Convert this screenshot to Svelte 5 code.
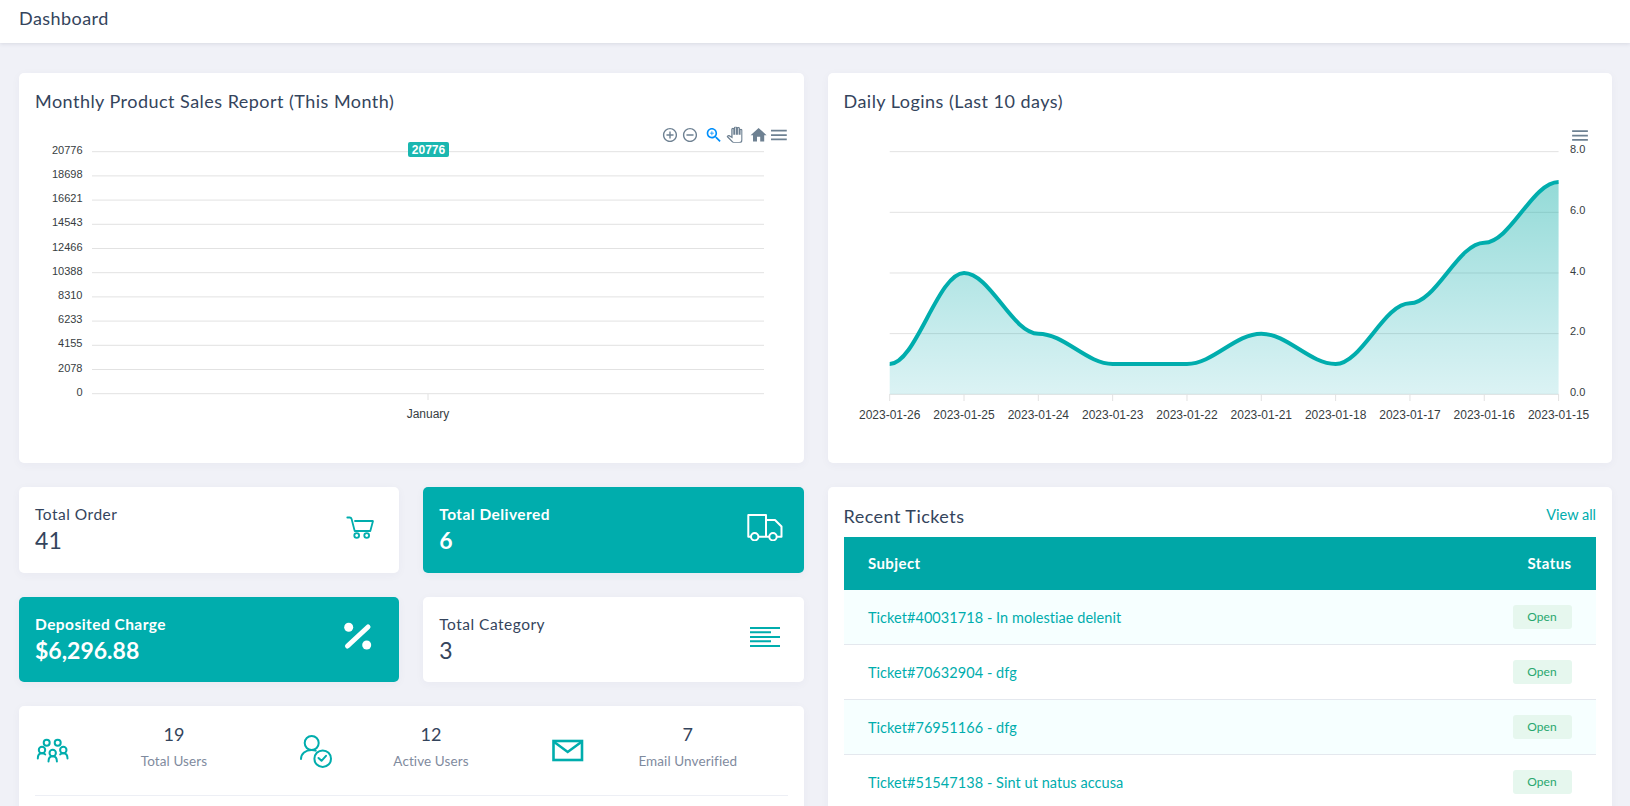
<script>
  const yLabels = [20776, 18698, 16621, 14543, 12466, 10388, 8310, 6233, 4155, 2078, 0];
  const leftY = (i) => 151.7 + i * 24.2;
  const dates = ['2023-01-26','2023-01-25','2023-01-24','2023-01-23','2023-01-22','2023-01-21','2023-01-18','2023-01-17','2023-01-16','2023-01-15'];
  const values = [1, 4, 2, 1, 1, 2, 1, 3, 5, 7];
  const X0 = 889.7, STEP = 74.32, Y0 = 394.3, UNIT = 30.33;
  const px = (i) => X0 + i * STEP;
  const py = (v) => Y0 - v * UNIT;
  let line = `M${px(0)} ${py(values[0])}`;
  for (let i = 1; i < values.length; i++) {
    const d = STEP * 0.35;
    line += ` C${px(i - 1) + d} ${py(values[i - 1])} ${px(i) - d} ${py(values[i])} ${px(i)} ${py(values[i])}`;
  }
  const area = `${line} L${px(9)} ${Y0} L${px(0)} ${Y0} Z`;
  const tickets = [
    'Ticket#40031718 - In molestiae delenit',
    'Ticket#70632904 - dfg',
    'Ticket#76951166 - dfg',
    'Ticket#51547138 - Sint ut natus accusa'
  ];
  const menuPath = 'M3 18h18v-2H3v2zm0-5h18v-2H3v2zm0-7v2h18V6H3z';
</script>

<div class="page">
  <header class="topbar"><h1>Dashboard</h1></header>

  <main class="content">
    <section class="row">
      <div class="card chart-card">
        <h2>Monthly Product Sales Report (This Month)</h2>
        <svg class="chart" viewBox="35 115 753 330" width="753" height="330">
          {#each yLabels as label, i}
            <line x1="92" x2="764" y1={leftY(i)} y2={leftY(i)} class="grid-line" />
            <text x="82.5" y={leftY(i) + 2} text-anchor="end" class="tick">{label}</text>
          {/each}
          <line x1="428" x2="428" y1="394" y2="400" class="grid-line" />
          <text x="428" y="418" text-anchor="middle" class="tick-lg">January</text>
          <rect x="408" y="142" width="41" height="15" rx="2" fill="#1ab7b0" />
          <text x="428.5" y="154" text-anchor="middle" class="data-label">20776</text>

          <svg x="661.5" y="126.5" width="17" height="17" viewBox="0 0 24 24" fill="#6e8192"><path d="M13 7h-2v4H7v2h4v4h2v-4h4v-2h-4V7zm-1-5C6.48 2 2 6.48 2 12s4.48 10 10 10 10-4.48 10-10S17.52 2 12 2zm0 18c-4.41 0-8-3.59-8-8s3.59-8 8-8 8 3.59 8 8-3.59 8-8 8z"/></svg>
          <svg x="681.5" y="126.5" width="17" height="17" viewBox="0 0 24 24" fill="#6e8192"><path d="M7 11v2h10v-2H7zm5-9C6.48 2 2 6.48 2 12s4.48 10 10 10 10-4.48 10-10S17.52 2 12 2zm0 18c-4.41 0-8-3.59-8-8s3.59-8 8-8 8 3.59 8 8-3.59 8-8 8z"/></svg>
          <svg x="704.3" y="125.6" width="19.2" height="19.2" viewBox="0 0 24 24" fill="#008ffb"><path d="M15.5 14h-.79l-.28-.27C15.41 12.59 16 11.11 16 9.5 16 5.91 13.09 3 9.5 3S3 5.91 3 9.5 5.91 16 9.5 16c1.61 0 3.09-.59 4.23-1.57l.27.28v.79l5 4.99L20.49 19l-4.99-5zm-6 0C7.01 14 5 11.99 5 9.5S7.01 5 9.5 5 14 7.01 14 9.5 11.99 14 9.5 14z"/><path d="M12 10h-2v2H9v-2H7V9h2V7h1v2h2v1z"/></svg>
          <svg x="726.6" y="126.7" width="16" height="16" viewBox="0 0 24 24" fill="#fff" stroke="#6e8192" stroke-width="2"><path d="M23 5.5V20c0 2.2-1.8 4-4 4h-7.3c-1.08 0-2.1-.43-2.85-1.19L1 14.83s1.26-1.23 1.3-1.25c.22-.19.49-.29.79-.29.22 0 .42.06.6.16.04.01 4.31 2.46 4.31 2.46V4c0-.83.67-1.5 1.5-1.5S11 3.17 11 4v7h1V1.5c0-.83.67-1.5 1.5-1.5S15 .67 15 1.5V11h1V2.5c0-.83.67-1.5 1.5-1.5s1.5.67 1.5 1.5V11h1V5.5c0-.83.67-1.5 1.5-1.5s1.5.67 1.5 1.5z"/></svg>
          <svg x="749" y="125.6" width="19.2" height="19.2" viewBox="0 0 24 24" fill="#6e8192"><path d="M10 20v-6h4v6h5v-8h3L12 3 2 12h3v8z"/></svg>
          <svg x="768.4" y="124.5" width="21" height="21" viewBox="0 0 24 24" fill="#6e8192"><path d={menuPath}/></svg>
        </svg>
      </div>

      <div class="card chart-card">
        <h2>Daily Logins (Last 10 days)</h2>
        <svg class="chart" viewBox="844 115 753 330" width="753" height="330">
          <defs>
            <linearGradient id="fillGrad" x1="0" y1="0" x2="0" y2="1">
              <stop offset="0" stop-color="#00a8a0" stop-opacity="0.42" />
              <stop offset="1" stop-color="#00a8b0" stop-opacity="0.14" />
            </linearGradient>
          </defs>
          {#each [8, 6, 4, 2, 0] as v}
            <line x1={X0} x2={px(9)} y1={py(v)} y2={py(v)} class="grid-line" />
            <text x="1570" y={py(v) + 1.6} class="tick">{v}.0</text>
          {/each}
          <path d={area} fill="url(#fillGrad)" />
          <path d={line} fill="none" stroke="#00adad" stroke-width="4" />
          {#each dates as d, i}
            <line x1={px(i)} x2={px(i)} y1="394" y2="401" class="grid-line" />
            <text x={px(i)} y="419" text-anchor="middle" class="tick-lg">{d}</text>
          {/each}
          <svg x="1569.5" y="125" width="21" height="21" viewBox="0 0 24 24" fill="#6e8192"><path d={menuPath}/></svg>
        </svg>
      </div>
    </section>

    <section class="row lower">
      <div class="left-col">
        <div class="stat-grid">
          <div class="card stat">
            <div><p class="stat-title">Total Order</p><p class="stat-value">41</p></div>
            <svg class="i-cart" viewBox="27 27 29 23" width="29" height="23" fill="none" stroke="#00adad" stroke-width="1.8" stroke-linecap="round" stroke-linejoin="round"><path d="M28.3 28.5h2.4c1 0 1.6.5 1.9 1.6L35.7 42h15.6L54 32H36"/><circle cx="37.7" cy="46.5" r="2.4"/><circle cx="47.7" cy="46.5" r="2.4"/></svg>
          </div>
          <div class="card stat teal">
            <div><p class="stat-title">Total Delivered</p><p class="stat-value">6</p></div>
            <svg class="i-truck" viewBox="18 24 36 27" width="36" height="27" fill="none" stroke="#fff" stroke-width="2" stroke-linejoin="round"><path d="M22 46.7h-2.7V25H37v21.7h-7.3M37 30h9l6.5 6.5v10.2h-5M40.500 46.700H37"/><circle cx="25.700" cy="46.700" r="3.700"/><circle cx="44" cy="46.700" r="3.700"/></svg>
          </div>
          <div class="card stat teal">
            <div><p class="stat-title">Deposited Charge</p><p class="stat-value">$6,296.88</p></div>
            <svg class="i-pct" viewBox="22 12 30 28" width="30" height="28" fill="#fff"><circle cx="27.700" cy="17.300" r="4.500"/><circle cx="45.700" cy="35" r="4.500"/><path d="M47 17 26.500 36" stroke="#fff" stroke-width="5" stroke-linecap="round"/></svg>
          </div>
          <div class="card stat">
            <div><p class="stat-title">Total Category</p><p class="stat-value">3</p></div>
            <svg class="i-list" viewBox="0 0 30 20" width="30" height="20" stroke="#00adad" stroke-width="2"><path d="M0 1h30M0 5.200h21M0 10h30M0 14.200h21M0 19h30"/></svg>
          </div>
        </div>

        <div class="card users">
          <div class="users-row">
            <div class="metric">
              <svg viewBox="15 14 36 30" width="36" height="30" fill="none" stroke="#00adad" stroke-width="2" stroke-linecap="round"><circle cx="26.700" cy="20.800" r="3"/><circle cx="37.700" cy="20.800" r="3"/><circle cx="22" cy="28" r="3.200"/><circle cx="32.700" cy="31" r="3.200"/><circle cx="43.300" cy="28" r="3.200"/><path d="M17.800 36.500c0-3.500 1.300-5.300 4.200-5.300 1.500 0 2.500.4 3.200 1.200M28.500 39.500c0-3.500 1.300-5.300 4.200-5.300s4.200 1.800 4.200 5.300M40.200 32.400c.7-.8 1.700-1.200 3.100-1.200 2.900 0 4.200 1.800 4.200 5.300"/></svg>
              <div class="metric-text"><strong>19</strong><span>Total Users</span></div>
            </div>
            <div class="metric">
              <svg viewBox="8 6 36 36" width="36" height="36" fill="none" stroke="#00adad" stroke-width="2" stroke-linecap="round" stroke-linejoin="round"><circle cx="21.700" cy="16" r="7"/><path d="M11 32c0-5.500 4.500-9 10.700-9 1.500 0 2.800.2 4 .6"/><circle cx="32.700" cy="31.700" r="8.300"/><path d="m28.500 31 3 2.800 4.500-5"/></svg>
              <div class="metric-text"><strong>12</strong><span>Active Users</span></div>
            </div>
            <div class="metric">
              <svg viewBox="9 11 36 27" width="36" height="27" fill="none" stroke="#00adad" stroke-width="2.600"><rect x="13.500" y="15" width="28.500" height="19"/><path d="m13.500 15.500 14.200 10.500L42 15.500"/></svg>
              <div class="metric-text last"><strong>7</strong><span>Email Unverified</span></div>
            </div>
          </div>
          <hr />
        </div>
      </div>

      <div class="card tickets">
        <div class="tickets-head">
          <h2>Recent Tickets</h2>
          <a href="#all">View all</a>
        </div>
        <table>
          <thead><tr><th>Subject</th><th class="right">Status</th></tr></thead>
          <tbody>
            {#each tickets as t}
              <tr><td><a href="#t">{t}</a></td><td class="right"><span class="badge">Open</span></td></tr>
            {/each}
          </tbody>
        </table>
      </div>
    </section>
  </main>
</div>

<style>
  :global(html), :global(body) { margin: 0; overflow: hidden; background: #f0f1f7; }
  .page { height: 806px; overflow: hidden; font-family: "Lato", "Noto Sans", sans-serif; color: #34445c; }
  .topbar { height: 43px; background: #fff; box-shadow: 0 1px 4px rgba(40, 50, 80, .12); display: flex; align-items: center; padding-left: 19px; }
  h1 { margin: 0; font-size: 18px; font-weight: 400; letter-spacing: .45px; position: relative; top: -4px; }
  h2 { margin: 0; font-size: 18px; font-weight: 400; line-height: 24px; letter-spacing: .47px; }
  p { margin: 0; }
  .content { padding: 30px 18px 0 19px; }
  .row { display: grid; grid-template-columns: minmax(0, 1fr) minmax(0, 1fr); gap: 24px; }
  .lower { margin-top: 24px; }
  .card { background: #fff; border-radius: 5px; box-shadow: 0 2px 10px rgba(60, 60, 110, .04); }
  .chart-card { height: 390px; padding: 16px 16px 0; box-sizing: border-box; }
  .chart { display: block; margin-top: 2px; }
  .grid-line { stroke: #e2e2e2; stroke-width: 1; }
  .tick { font: 11px "Liberation Sans", Arial, sans-serif; fill: #373d3f; }
  .tick-lg { font: 12px "Liberation Sans", Arial, sans-serif; fill: #373d3f; }
  .data-label { font: bold 12px "Liberation Sans", Arial, sans-serif; fill: #fff; }
  .left-col { display: flex; flex-direction: column; gap: 24px; min-width: 0; }
  .stat-grid { display: grid; grid-template-columns: minmax(0, 1fr) minmax(0, 1fr); gap: 24px; }
  .stat { display: flex; justify-content: space-between; align-items: center; height: 85.5px; box-sizing: border-box; padding: 0 24px 2px 16px; }
  .stat svg { margin-bottom: 2px; }
  .stat-title { font-size: 15.5px; line-height: 24px; letter-spacing: .5px; }
  .stat-value { font-size: 23px; line-height: 30px; letter-spacing: .2px; margin-top: -1px; }
  .teal { background: #00adad; color: #fff; }
  .teal .stat-title { font-weight: 700; letter-spacing: .45px; }
  .teal .stat-value { font-weight: 700; letter-spacing: 0; }
  .stat .i-truck { margin-right: -3px; }
  .stat .i-pct { margin-right: 2px; margin-bottom: 4px; }
  .users { padding: 0 16px 40px; }
  .users-row { display: grid; grid-template-columns: 242px 230px minmax(0, 1fr); column-gap: 21px; height: 89px; align-items: center; }
  .metric { display: flex; align-items: center; }
  .metric svg { flex: none; }
  .metric-text { flex: 1; display: flex; flex-direction: column; align-items: center; gap: 4px; padding-bottom: 8px; }
  .metric-text.last { padding-left: 3px; }
  .metric-text strong { font-size: 18px; font-weight: 400; line-height: 24px; }
  .metric-text span { font-size: 13.5px; line-height: 22px; color: #7f8b9e; letter-spacing: .1px; }
  hr { margin: 0; border: 0; border-top: 1px solid #edeff5; }
  .tickets { padding: 0 16px 40px; min-width: 0; }
  .tickets-head { height: 50px; display: flex; justify-content: space-between; }
  .tickets-head h2 { margin-top: 17px; }
  .tickets-head a { color: #00adad; font-size: 14.5px; text-decoration: none; margin-top: 17px; line-height: 22px; }
  table { width: 100%; border-collapse: separate; border-spacing: 0; }
  th { background: #00a7a7; color: #fff; height: 53px; box-sizing: border-box; padding: 0 24.5px 2px; text-align: left; font-size: 15px; font-weight: 700; letter-spacing: .4px; }
  td { height: 55px; box-sizing: border-box; padding: 0 24.5px; border-bottom: 1px solid #e4e8ee; font-size: 14.5px; letter-spacing: .05px; }
  tbody tr:nth-child(odd) { background: #f6ffff; }
  td a { color: #00adad; text-decoration: none; }
  .right { text-align: right; }
  .badge { display: inline-block; width: 59px; height: 24px; line-height: 24px; box-sizing: border-box; text-align: center; background: #e6f7ee; color: #28a76f; font-size: 12px; border-radius: 3px; vertical-align: middle; }
</style>
